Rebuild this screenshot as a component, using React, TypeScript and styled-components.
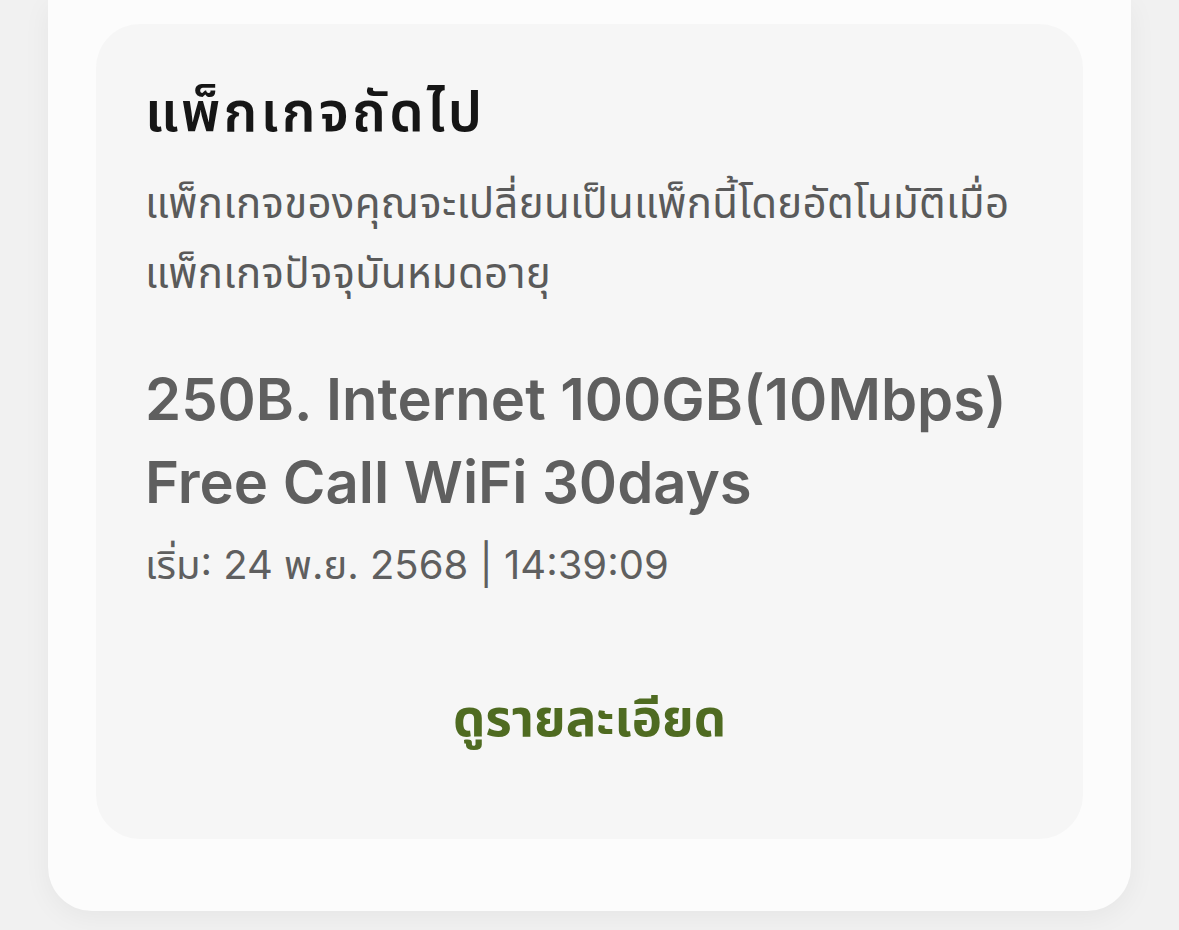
import React from "react";
import styled, { createGlobalStyle } from "styled-components";

const Global = createGlobalStyle`
  html, body { margin: 0; padding: 0; background: #f1f1f1; }
  body { font-family: "Inter", "Noto Sans Thai", "Noto Sans", sans-serif; }
`;

const Page = styled.div`
  padding: 0 48px 19px 48px;
`;

const OuterCard = styled.section`
  background: #fcfcfc;
  border-radius: 0 0 44px 44px;
  padding: 24px 48px 72px 48px;
  box-shadow: 0 6px 28px rgba(0, 0, 0, 0.05);
`;

const InnerCard = styled.div`
  background: #f6f6f6;
  border-radius: 44px;
  padding: 52px 49px 80px 49px;
  display: flex;
  flex-direction: column;
`;

const Title = styled.h2`
  margin: 0;
  font-size: 55px;
  font-weight: 600;
  letter-spacing: 3.2px;
  color: #161616;
  line-height: 70px;
`;

const Desc = styled.p`
  margin: 22px 0 0 0;
  font-size: 42px;
  letter-spacing: 0.3px;
  color: #5a5a5a;
  line-height: 70px;
`;

const PackageName = styled.div`
  margin-top: 50px;
  font-size: 58px;
  font-weight: 600;
  color: #5f5f5f;
  line-height: 83px;
`;

const StartDate = styled.div`
  margin-top: 11px;
  font-size: 40px;
  color: #5f5f5f;
  line-height: 60px;
`;

const DetailLink = styled.a`
  margin-top: 87px;
  align-self: center;
  font-size: 51px;
  font-weight: 700;
  color: #4f6b21;
  text-decoration: none;
  cursor: pointer;
`;

export default function App() {
  return (
    <>
      <Global />
      <Page>
        <OuterCard>
          <InnerCard>
            <Title>แพ็กเกจถัดไป</Title>
            <Desc>
              แพ็กเกจของคุณจะเปลี่ยนเป็นแพ็กนี้โดยอัตโนมัติเมื่อ
              <br />
              แพ็กเกจปัจจุบันหมดอายุ
            </Desc>
            <PackageName>
              250B. Internet 100GB(10Mbps)
              <br />
              Free Call WiFi 30days
            </PackageName>
            <StartDate>เริ่ม: 24 พ.ย. 2568 | 14:39:09</StartDate>
            <DetailLink>ดูรายละเอียด</DetailLink>
          </InnerCard>
        </OuterCard>
      </Page>
    </>
  );
}
